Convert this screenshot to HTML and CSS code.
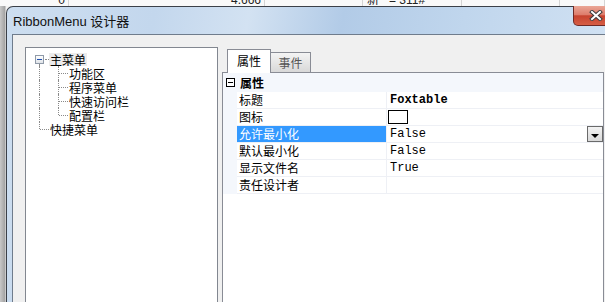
FILE: index.html
```html
<!DOCTYPE html>
<html lang="zh">
<head>
  <meta charset="UTF-8" />
  <title>RibbonMenu 设计器</title>
  <link rel="stylesheet" href="styles.css">
</head>
<body>
  <div class="sheet">
    <span class="sc w1"><span>0</span></span>
    <span class="sc w2"><span>4.666</span></span>
    <span class="sc w3"><span></span></span>
    <span class="sc w4 left"><span>新&nbsp;&nbsp;&nbsp;=&nbsp;311#</span></span>
    <span class="sc w5"><span></span></span>
    <span class="sc w6"><span></span></span>
  </div>

  <div class="window">
    <div class="titlebar">
      <span class="title">RibbonMenu 设计器</span>
      <div class="close">
        <svg width="14" height="11" viewBox="0 0 14 11">
          <path d="M3 2 L11 9 M11 2 L3 9" stroke="#3c3c3c" stroke-width="4" stroke-linecap="square" fill="none"/>
          <path d="M3 2 L11 9 M11 2 L3 9" stroke="#ffffff" stroke-width="2" stroke-linecap="square" fill="none"/>
        </svg>
      </div>
    </div>

    <div class="client">
      <div class="tree">
        <div class="tree-row">
          <span class="tw open"><span class="exp"></span></span>
          <span class="lbl sel">主菜单</span>
        </div>
        <div class="tree-row">
          <span class="tw bar"></span><span class="tw tee"></span>
          <span class="lbl">功能区</span>
        </div>
        <div class="tree-row">
          <span class="tw bar"></span><span class="tw tee"></span>
          <span class="lbl">程序菜单</span>
        </div>
        <div class="tree-row">
          <span class="tw bar"></span><span class="tw tee"></span>
          <span class="lbl">快速访问栏</span>
        </div>
        <div class="tree-row">
          <span class="tw bar"></span><span class="tw end"></span>
          <span class="lbl">配置栏</span>
        </div>
        <div class="tree-row">
          <span class="tw end"></span>
          <span class="lbl">快捷菜单</span>
        </div>
      </div>

      <div class="tabs">
        <div class="tab-strip">
          <div class="tab active">属性</div>
          <div class="tab">事件</div>
        </div>
        <div class="tab-page">
          <div class="cat-row">
            <svg class="cat-toggle" width="9" height="9" viewBox="0 0 9 9">
              <rect x="0.5" y="0.5" width="8" height="8" fill="#fff" stroke="#000"/>
              <path d="M2 4.5 H7" stroke="#000"/>
            </svg>
            <span class="cat-name">属性</span>
          </div>
          <div class="prop-row">
            <span class="gut"></span>
            <span class="name">标题</span>
            <span class="val bold">Foxtable</span>
          </div>
          <div class="prop-row">
            <span class="gut"></span>
            <span class="name">图标</span>
            <span class="val"><span class="icon-box"></span></span>
          </div>
          <div class="prop-row">
            <span class="gut"></span>
            <span class="name sel">允许最小化</span>
            <span class="val">False<span class="dd"><span class="arrow"></span></span></span>
          </div>
          <div class="prop-row">
            <span class="gut"></span>
            <span class="name">默认最小化</span>
            <span class="val">False</span>
          </div>
          <div class="prop-row">
            <span class="gut"></span>
            <span class="name">显示文件名</span>
            <span class="val">True</span>
          </div>
          <div class="prop-row">
            <span class="gut"></span>
            <span class="name">责任设计者</span>
            <span class="val"></span>
          </div>
        </div>
      </div>
    </div>
  </div>
</body>
</html>
```

FILE: styles.css
```css
html, body {
  margin: 0;
  height: 302px;
  overflow: hidden;
}

body {
  font-family: "Noto Sans CJK SC", sans-serif;
  font-size: 12px;
  color: #000;
  background: linear-gradient(to right, #c8c8c8 0, #a2a2a2 5px, #f2f2f2 6px);
}

/* spreadsheet behind the dialog */
.sheet {
  display: flex;
  height: 6px;
  overflow: hidden;
  background: #f9f9f9;
  font-family: "Liberation Sans", "Noto Sans CJK SC", sans-serif;
  font-size: 12px;
  color: #222;
}

.sc {
  box-sizing: border-box;
  height: 6px;
  border-right: 1px solid #d4d4d4;
  text-align: right;
  padding-right: 3px;
  white-space: nowrap;
}

.sc > span {
  display: block;
  line-height: 12px;
  margin-top: -6px;
}

.sc.left {
  text-align: left;
  padding-left: 4px;
}

.w1 { width: 69px; }
.w2 { width: 196px; }
.w3 { width: 98px; }
.w4 { width: 99px; }
.w5 { width: 98px; }
.w6 { flex: 1; }

/* dialog frame */
.window {
  margin-left: 6px;
  width: 620px;
  box-sizing: border-box;
  border: 1px solid #3b4048;
  border-bottom: none;
  border-radius: 7px 7px 0 0;
  padding: 0 5px;
  background: linear-gradient(100deg, #cddef0 0%, #c3d7ed 22%, #d3e2f2 36%, #b2cbe7 50%, #c0d6ed 68%, #d8e6f5 100%);
}

.titlebar {
  height: 27px;
  display: flex;
  align-items: center;
}

.title {
  padding-left: 1px;
  font-family: "Liberation Sans", "Noto Sans CJK SC", sans-serif;
  font-size: 13px;
  color: #111;
}

.close {
  margin-left: auto;
  margin-right: 2px;
  align-self: flex-start;
  margin-top: -1px;
  width: 45px;
  height: 20px;
  box-sizing: border-box;
  border: 1px solid #6e2a26;
  border-top: none;
  border-radius: 0 0 5px 5px;
  background: linear-gradient(#eaa696 0%, #de7d6c 45%, #c7432f 52%, #d65e45 100%);
  display: flex;
  align-items: center;
  justify-content: center;
}

.client {
  height: 300px;
  box-sizing: border-box;
  border: 1px solid #6f7c8c;
  background: #f0f0f0;
  display: flex;
  gap: 4px;
  padding: 12px 0 0 12px;
}

/* tree view */
.tree {
  width: 193px;
  height: 280px;
  box-sizing: border-box;
  border: 1px solid #828790;
  background: #fff;
  padding: 4px 0 0 4px;
}

.tree-row {
  display: flex;
  align-items: center;
  height: 14px;
}

.tw {
  position: relative;
  flex: none;
  width: 19px;
  height: 14px;
}

.tw::before,
.tw::after {
  content: "";
  position: absolute;
}

.tw.bar::before,
.tw.tee::before {
  left: 9px;
  top: 0;
  bottom: 0;
  border-left: 1px dotted #8a8a8a;
}

.tw.end::before {
  left: 9px;
  top: 0;
  height: 7px;
  border-left: 1px dotted #8a8a8a;
}

.tw.tee::after,
.tw.end::after {
  left: 10px;
  right: 0;
  top: 7px;
  border-top: 1px dotted #8a8a8a;
}

.tw.open::before {
  left: 9px;
  top: 12px;
  bottom: 0;
  border-left: 1px dotted #8a8a8a;
}

.tw.open::after {
  left: 15px;
  right: 0;
  top: 7px;
  border-top: 1px dotted #8a8a8a;
}

.exp {
  display: block;
  position: relative;
  width: 9px;
  height: 9px;
  box-sizing: border-box;
  margin: 3px 0 0 5px;
  border: 1px solid #8f9aa8;
  background: linear-gradient(#ffffff, #dfe3e8);
}

.exp::after {
  content: "";
  position: absolute;
  left: 1px;
  top: 3px;
  width: 5px;
  height: 1px;
  background: #1f4fb0;
}

.lbl {
  display: block;
  height: 13px;
  padding: 0 1px;
  line-height: 13px;
  white-space: nowrap;
}

.lbl.sel {
  background: #ececec;
}

/* tab control */
.tabs {
  width: 382px;
  display: flex;
  flex-direction: column;
}

.tab-strip {
  height: 25px;
  box-sizing: border-box;
  padding: 2px 0 0 5px;
  display: flex;
  align-items: flex-end;
}

.tab {
  box-sizing: border-box;
  width: 41px;
  height: 20px;
  margin-left: -1px;
  border: 1px solid #898c95;
  border-bottom: none;
  background: linear-gradient(#f4f4f4, #e6e6e6 50%, #d8d8d8);
  color: #555;
  text-align: center;
  line-height: 19px;
}

.tab.active {
  position: relative;
  z-index: 1;
  margin-left: 0;
  width: 44px;
  height: 24px;
  margin-bottom: -1px;
  background: #fff;
  color: #000;
  line-height: 21px;
}

.tab-page {
  flex: 1;
  border: 1px solid #898c95;
  background: #fff;
}

/* property grid */
.cat-row {
  display: flex;
  align-items: center;
  height: 19px;
  background: #f4f7fc;
}

.cat-toggle {
  margin-left: 3px;
}

.cat-name {
  margin-left: 5px;
  font-weight: bold;
}

.prop-row {
  display: flex;
  height: 17px;
}

.gut {
  width: 14px;
  flex: none;
  background: #f4f7fc;
}

.name {
  width: 149px;
  flex: none;
  box-sizing: border-box;
  padding-left: 2px;
  line-height: 16px;
  border-bottom: 1px solid #eef0f5;
  white-space: nowrap;
}

.name.sel {
  background: #3399ff;
  color: #fff;
}

.val {
  flex: 1;
  display: flex;
  align-items: center;
  padding-left: 3px;
  border-left: 1px solid #eef0f5;
  border-bottom: 1px solid #eef0f5;
  font-family: "Liberation Mono", monospace;
  font-size: 12px;
}

.val.bold {
  font-weight: bold;
}

.icon-box {
  width: 20px;
  height: 14px;
  box-sizing: border-box;
  margin-left: -2px;
  border: 1px solid #000;
  background: #fff;
}

.dd {
  margin-left: auto;
  width: 16px;
  height: 16px;
  box-sizing: border-box;
  border: 1px solid #6a6a6a;
  background: linear-gradient(#f3f3f3, #d9d9d9);
  display: flex;
  align-items: flex-end;
  justify-content: center;
  padding-bottom: 3px;
}

.arrow {
  width: 0;
  height: 0;
  border-left: 4px solid transparent;
  border-right: 4px solid transparent;
  border-top: 4px solid #000;
}
```
